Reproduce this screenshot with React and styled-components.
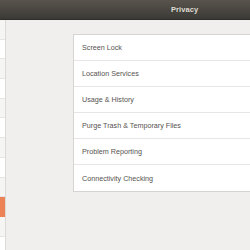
import styled, { createGlobalStyle } from "styled-components";

const GlobalStyle = createGlobalStyle`
	html, body {
		margin: 0;
		padding: 0;
	}
	body {
		font-family: "Liberation Sans", "DejaVu Sans", sans-serif;
		background: #f0efee;
	}
`;

const privacyItems = [
	"Screen Lock",
	"Location Services",
	"Usage & History",
	"Purge Trash & Temporary Files",
	"Problem Reporting",
	"Connectivity Checking",
];

// the sidebar is almost entirely off screen, only the row backgrounds show
const sidebarRows = Array.from({ length: 12 }, (_, i) => ({
	selected: i === 9,
	shaded: i % 2 === 0,
}));

function App() {
	return (
		<Window>
			<GlobalStyle />
			<HeaderBar>
				<HeaderSpacer />
				<HeaderTitle>Privacy</HeaderTitle>
			</HeaderBar>
			<Body>
				<Sidebar>
					{sidebarRows.map((row, i) => (
						<SidebarRow key={i} selected={row.selected} shaded={row.shaded} />
					))}
				</Sidebar>
				<Content>
					<ListCard>
						{privacyItems.map((item) => (
							<ListRow key={item}>{item}</ListRow>
						))}
					</ListCard>
				</Content>
			</Body>
		</Window>
	);
}

export default App;

const Window = styled.div`
	width: 250px;
	height: 250px;
	overflow: hidden;
	display: flex;
	flex-direction: column;
	background: #f0efee;
`;

const HeaderBar = styled.header`
	height: 20px;
	flex-shrink: 0;
	display: flex;
	align-items: center;
	background: linear-gradient(#58544d, #3c3a36);
	border-bottom: 1px solid #2e2d2a;
	box-sizing: border-box;
`;

const HeaderSpacer = styled.div`
	width: 171px;
	flex-shrink: 0;
`;

const HeaderTitle = styled.span`
	color: #dfdbd2;
	font-size: 7.5px;
	font-weight: 700;
	letter-spacing: 0.1px;
`;

const Body = styled.div`
	flex: 1;
	display: flex;
	min-height: 0;
`;

const Sidebar = styled.nav`
	width: 5px;
	flex-shrink: 0;
	display: flex;
	flex-direction: column;
	border-right: 1px solid #dcdad7;
	background: #ffffff;
`;

const SidebarRow = styled.div`
	height: 19.7px;
	flex-shrink: 0;
	box-sizing: border-box;
	border-bottom: 1px solid ${(props) => (props.selected ? "#ec8356" : "#e6e5e3")};
	background: ${(props) =>
		props.selected ? "#ec8356" : props.shaded ? "#f5f5f4" : "#ffffff"};
`;

const Content = styled.main`
	flex: 1;
	padding: 14px 0 0 67px;
	min-width: 0;
`;

const ListCard = styled.div`
	width: 320px;
	background: #ffffff;
	border: 1px solid #d6d4d1;
	box-sizing: border-box;
	display: flex;
	flex-direction: column;
`;

const ListRow = styled.div`
	height: 26px;
	display: flex;
	align-items: center;
	padding-left: 8px;
	font-size: 7.2px;
	color: #56534f;
	border-bottom: 1px solid #e7e6e4;
	box-sizing: border-box;

	&:last-child {
		border-bottom: none;
	}
`;
